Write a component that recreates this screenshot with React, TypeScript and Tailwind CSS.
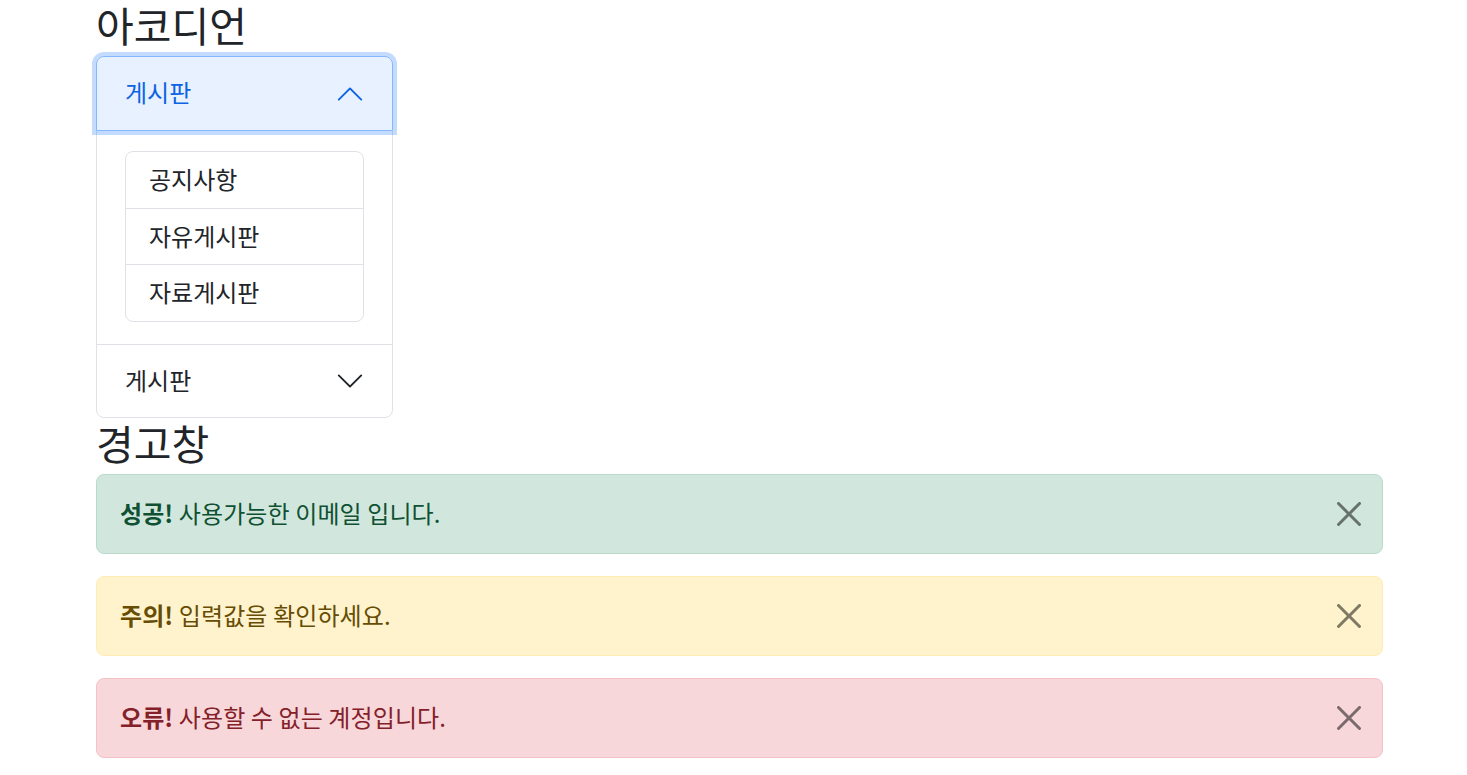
import React from "react";

const font = { fontFamily: '"Noto Sans CJK KR", "Noto Sans", sans-serif' };

function ChevronUp({ className }: { className?: string }) {
  return (
    <svg viewBox="0 0 16 16" className={className} fill="currentColor">
      <path
        fillRule="evenodd"
        transform="rotate(180 8 8)"
        d="M1.646 4.646a.5.5 0 0 1 .708 0L8 10.293l5.646-5.647a.5.5 0 0 1 .708.708l-6 6a.5.5 0 0 1-.708 0l-6-6a.5.5 0 0 1 0-.708z"
      />
    </svg>
  );
}

function ChevronDown({ className }: { className?: string }) {
  return (
    <svg viewBox="0 0 16 16" className={className} fill="currentColor">
      <path
        fillRule="evenodd"
        d="M1.646 4.646a.5.5 0 0 1 .708 0L8 10.293l5.646-5.647a.5.5 0 0 1 .708.708l-6 6a.5.5 0 0 1-.708 0l-6-6a.5.5 0 0 1 0-.708z"
      />
    </svg>
  );
}

function CloseX() {
  return (
    <svg viewBox="0 0 16 16" className="w-[24px] h-[24px] opacity-50" fill="#000">
      <path d="M.293.293a1 1 0 0 1 1.414 0L8 6.586 14.293.293a1 1 0 1 1 1.414 1.414L9.414 8l6.293 6.293a1 1 0 0 1-1.414 1.414L8 9.414l-6.293 6.293a1 1 0 0 1-1.414-1.414L6.586 8 .293 1.707a1 1 0 0 1 0-1.414z" />
    </svg>
  );
}

function Alert({
  strong,
  text,
  bg,
  border,
  color,
}: {
  strong: string;
  text: string;
  bg: string;
  border: string;
  color: string;
}) {
  return (
    <div
      className={`h-[80px] rounded-[8px] border flex items-center justify-between pl-[23px] pr-[21px] ${bg} ${border} ${color}`}
    >
      <div className="text-[24px] leading-[32px] pb-[2px] tracking-[0.1px]">
        <strong className="font-bold">{strong}</strong> {text}
      </div>
      <CloseX />
    </div>
  );
}

export default function App() {
  return (
    <div className="bg-white min-h-[775px] text-[#212529]" style={font}>
      <div className="ml-[96px] w-[1287px]">
        <h1 className="text-[41px] leading-[48px] mb-[8px] font-normal">아코디언</h1>
        <div className="w-[297px] border border-[#dee2e6] rounded-[8px]">
          <div className="relative">
            <div className="absolute -inset-[1px] rounded-t-[8px] border border-[#86b7fe] ring-4 ring-[rgba(13,110,253,0.25)] pointer-events-none z-10" />
            <button className="w-full h-[73px] flex items-center justify-between pl-[28px] pr-[27px] bg-[#e7f1ff] text-[#0c63e4] rounded-t-[7px] text-[24px] leading-[32px]">
              <span className="pb-[3px]">게시판</span>
              <ChevronUp className="w-[30px] h-[30px]" />
            </button>
          </div>
          <div className="px-[28px] pt-[21px] pb-[22px] border-b border-[#dee2e6]">
            <ul className="border border-[#dee2e6] rounded-[8px] text-[24px] leading-[32px]">
              <li className="h-[57px] flex items-center px-[23px] pb-[2px] border-b border-[#dee2e6]">공지사항</li>
              <li className="h-[56px] flex items-center px-[23px] pb-[2px] border-b border-[#dee2e6]">자유게시판</li>
              <li className="h-[56px] flex items-center px-[23px] pb-[2px]">자료게시판</li>
            </ul>
          </div>
          <button className="w-full h-[72px] flex items-center justify-between pl-[28px] pr-[27px] text-[24px] leading-[32px] text-[#212529]">
            <span className="pb-[3px]">게시판</span>
            <ChevronDown className="w-[30px] h-[30px]" />
          </button>
        </div>
        <h1 className="text-[41px] leading-[48px] mb-[8px] font-normal">경고창</h1>
        <div className="flex flex-col gap-[22px]">
          <Alert
            strong="성공!"
            text="사용가능한 이메일 입니다."
            bg="bg-[#d1e7dd]"
            border="border-[#badbcc]"
            color="text-[#0f5132]"
          />
          <Alert
            strong="주의!"
            text="입력값을 확인하세요."
            bg="bg-[#fff3cd]"
            border="border-[#ffecb5]"
            color="text-[#664d03]"
          />
          <Alert
            strong="오류!"
            text="사용할 수 없는 계정입니다."
            bg="bg-[#f8d7da]"
            border="border-[#f5c2c7]"
            color="text-[#842029]"
          />
        </div>
      </div>
    </div>
  );
}
